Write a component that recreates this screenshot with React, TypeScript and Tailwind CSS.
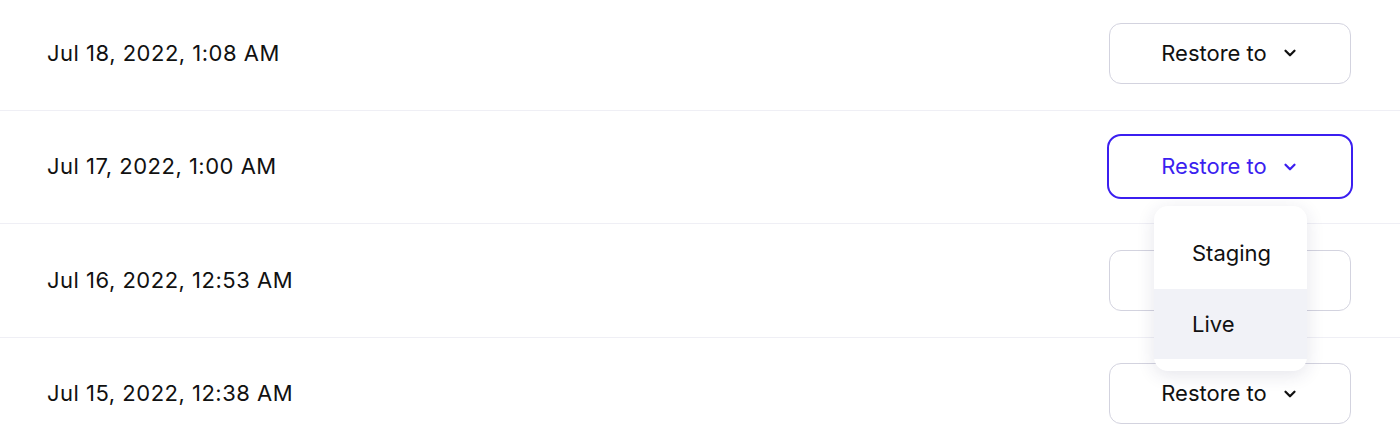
import { ChevronDown } from "lucide-react";

const rows = [
  { date: "Jul 18, 2022, 1:08 AM" },
  { date: "Jul 17, 2022, 1:00 AM", open: true },
  { date: "Jul 16, 2022, 12:53 AM" },
  { date: "Jul 15, 2022, 12:38 AM" },
];

function RestoreButton({ open }: { open?: boolean }) {
  if (open) {
    return (
      <div className="relative">
        <button className="-m-[2px] flex h-[65px] w-[246px] items-center justify-center gap-[14px] rounded-[14px] border-[2.5px] border-[#3b1ff0] bg-white text-[22px] text-[#3b1ff0]">
          <span>Restore to</span>
          <ChevronDown size={18} strokeWidth={3} />
        </button>
        <div className="absolute left-[45px] top-[70px] z-10 w-[153px] rounded-[14px] bg-white py-3 shadow-[0_4px_18px_rgba(40,40,90,0.12)]">
          <div className="flex h-[71px] items-center px-[38px] text-[22px] text-[#111]">Staging</div>
          <div className="flex h-[70px] items-center bg-[#f1f2f7] px-[38px] text-[22px] text-[#111]">Live</div>
        </div>
      </div>
    );
  }
  return (
    <button className="flex h-[61px] w-[242px] items-center justify-center gap-[14px] rounded-[12px] border border-[#d3d3df] bg-white text-[22px] text-[#111]">
      <span>Restore to</span>
      <ChevronDown size={18} strokeWidth={3} />
    </button>
  );
}

export default function App() {
  return (
    <main className="h-[444px] overflow-hidden bg-white font-['Inter',sans-serif]">
      <div className="-mt-[3px]">
        {rows.map((r) => (
          <div
            key={r.date}
            className="flex h-[113.5px] items-center justify-between border-b border-[#efeff5] pl-[47px] pr-[49px]"
          >
            <span className="text-[22px] tracking-[0.5px] text-[#111]">{r.date}</span>
            <RestoreButton open={r.open} />
          </div>
        ))}
      </div>
    </main>
  );
}
